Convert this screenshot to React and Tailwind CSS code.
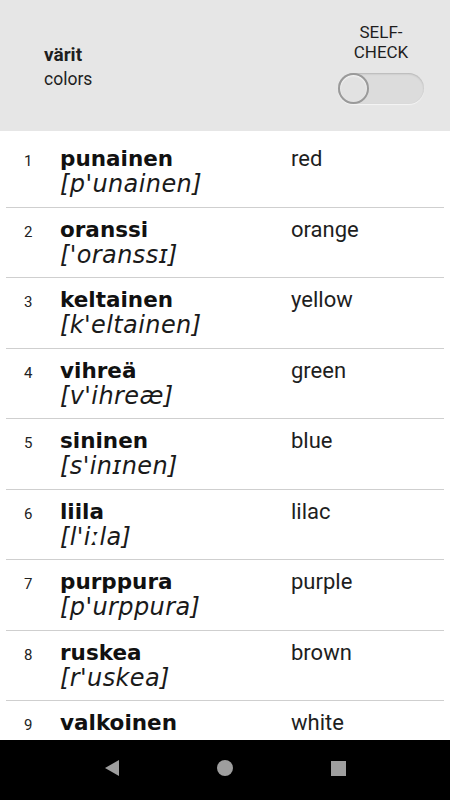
import React from 'react';

const words = [
  { n: 1, word: 'punainen', ipa: "[p'unainen]", tr: 'red' },
  { n: 2, word: 'oranssi', ipa: "['oranssɪ]", tr: 'orange' },
  { n: 3, word: 'keltainen', ipa: "[k'eltainen]", tr: 'yellow' },
  { n: 4, word: 'vihreä', ipa: "[v'ihreæ]", tr: 'green' },
  { n: 5, word: 'sininen', ipa: "[s'inɪnen]", tr: 'blue' },
  { n: 6, word: 'liila', ipa: "[l'iːla]", tr: 'lilac' },
  { n: 7, word: 'purppura', ipa: "[p'urppura]", tr: 'purple' },
  { n: 8, word: 'ruskea', ipa: "[r'uskea]", tr: 'brown' },
  { n: 9, word: 'valkoinen', ipa: '', tr: 'white' },
];

const roboto = "font-['Roboto',sans-serif]";
const dejavu = "font-['DejaVu_Sans',sans-serif]";

const Header = () => (
  <div className="h-[131px] shrink-0 bg-[#e6e6e6] flex items-start justify-between">
    <div className={`pl-[44px] pt-[43px] text-[#1e1e1e] ${roboto}`}>
      <div className="text-[19px] leading-[24px] font-bold">värit</div>
      <div className="text-[17.5px] leading-[24px]">colors</div>
    </div>
    <div className={`pr-[26px] pt-[22px] flex flex-col items-center ${roboto}`}>
      <div className="text-[17px] leading-[20px] text-[#1e1e1e] text-center">
        SELF-
        <br />
        CHECK
      </div>
      <div className="mt-[11px] w-[86px] h-[31px] rounded-full bg-[#dcdcdc] shadow-[inset_0_1px_2px_rgba(0,0,0,0.18),0_1px_1px_rgba(255,255,255,0.6)] flex items-center">
        <div className="w-[31px] h-[31px] rounded-full border-2 border-[#9a9a9a] bg-[#e2e2e2] shadow-[inset_0_1px_2px_rgba(255,255,255,0.8)]" />
      </div>
    </div>
  </div>
);

const Row = ({ item }) => (
  <div className="h-[70.5px] shrink-0 mx-[6px] border-b border-[#cfcfcf] flex items-baseline pt-[5px]">
    <div className={`w-[54px] pl-[18px] text-[15px] text-[#222] ${roboto}`}>{item.n}</div>
    <div className="w-[231px]">
      <div className={`text-[21.5px] leading-[26px] font-bold text-[#111] ${dejavu}`}>{item.word}</div>
      {item.ipa && (
        <div className={`text-[24px] leading-[25px] italic tracking-[0.4px] text-[#1a1a1a] ${dejavu}`}>{item.ipa}</div>
      )}
    </div>
    <div className={`text-[22px] text-[#1e1e1e] ${roboto}`}>{item.tr}</div>
  </div>
);

const NavBar = () => (
  <div className="h-[60px] shrink-0 bg-black flex items-center justify-center gap-[98px] pb-[4px]">
    <svg width="14" height="16" viewBox="0 0 14 16">
      <path d="M0 8 L14 0 L14 16 Z" fill="#9e9e9e" />
    </svg>
    <svg width="16" height="16" viewBox="0 0 16 16">
      <circle cx="8" cy="8" r="8" fill="#9e9e9e" />
    </svg>
    <svg width="15" height="15" viewBox="0 0 15 15">
      <rect width="15" height="15" fill="#9e9e9e" />
    </svg>
  </div>
);

export default function App() {
  return (
    <div className="w-[450px] h-[800px] bg-white flex flex-col overflow-hidden">
      <Header />
      <div className="flex-1 overflow-hidden flex flex-col pt-[6px]">
        {words.map((item) => (
          <Row key={item.n} item={item} />
        ))}
      </div>
      <NavBar />
    </div>
  );
}
